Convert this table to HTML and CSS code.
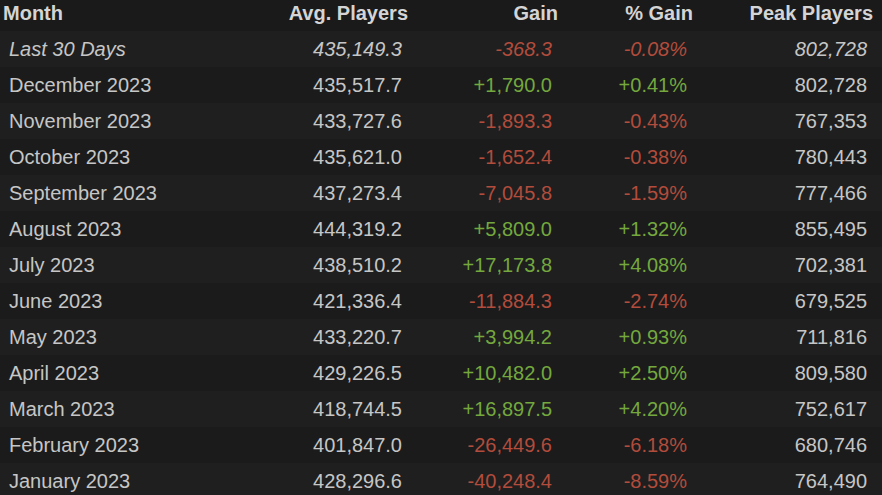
FILE: index.html
```html
<!DOCTYPE html>
<html>
<head>
<meta charset="utf-8">
<link rel="stylesheet" href="styles.css">
</head>
<body>
<div class="wrap">
<table class="stats">
  <thead>
    <tr><th class="c-month">Month</th><th>Avg. Players</th><th>Gain</th><th>% Gain</th><th>Peak Players</th></tr>
  </thead>
  <tbody>
    <tr class="current"><td class="c-month">Last 30 Days</td><td>435,149.3</td><td class="neg">-368.3</td><td class="neg">-0.08%</td><td>802,728</td></tr>
    <tr><td class="c-month">December 2023</td><td>435,517.7</td><td class="pos">+1,790.0</td><td class="pos">+0.41%</td><td>802,728</td></tr>
    <tr><td class="c-month">November 2023</td><td>433,727.6</td><td class="neg">-1,893.3</td><td class="neg">-0.43%</td><td>767,353</td></tr>
    <tr><td class="c-month">October 2023</td><td>435,621.0</td><td class="neg">-1,652.4</td><td class="neg">-0.38%</td><td>780,443</td></tr>
    <tr><td class="c-month">September 2023</td><td>437,273.4</td><td class="neg">-7,045.8</td><td class="neg">-1.59%</td><td>777,466</td></tr>
    <tr><td class="c-month">August 2023</td><td>444,319.2</td><td class="pos">+5,809.0</td><td class="pos">+1.32%</td><td>855,495</td></tr>
    <tr><td class="c-month">July 2023</td><td>438,510.2</td><td class="pos">+17,173.8</td><td class="pos">+4.08%</td><td>702,381</td></tr>
    <tr><td class="c-month">June 2023</td><td>421,336.4</td><td class="neg">-11,884.3</td><td class="neg">-2.74%</td><td>679,525</td></tr>
    <tr><td class="c-month">May 2023</td><td>433,220.7</td><td class="pos">+3,994.2</td><td class="pos">+0.93%</td><td>711,816</td></tr>
    <tr><td class="c-month">April 2023</td><td>429,226.5</td><td class="pos">+10,482.0</td><td class="pos">+2.50%</td><td>809,580</td></tr>
    <tr><td class="c-month">March 2023</td><td>418,744.5</td><td class="pos">+16,897.5</td><td class="pos">+4.20%</td><td>752,617</td></tr>
    <tr><td class="c-month">February 2023</td><td>401,847.0</td><td class="neg">-26,449.6</td><td class="neg">-6.18%</td><td>680,746</td></tr>
    <tr><td class="c-month">January 2023</td><td>428,296.6</td><td class="neg">-40,248.4</td><td class="neg">-8.59%</td><td>764,490</td></tr>
  </tbody>
</table>
</div>
</body>
</html>
```
FILE: styles.css
```css
html, body {
  margin: 0;
  padding: 0;
  background: #1b1b1b;
  overflow: hidden;
}
.wrap {
  margin-top: -5px;
}
.stats {
  width: 882px;
  border-collapse: collapse;
  table-layout: fixed;
  font-family: "Liberation Sans", Arial, sans-serif;
  font-size: 20px;
  color: #c6c6c6;
}
.stats th, .stats td {
  box-sizing: border-box;
  height: 36px;
  padding: 0;
  line-height: 36px;
  text-align: right;
  white-space: nowrap;
}
.stats th {
  font-weight: bold;
  color: #d4d4d4;
  background: #1a1a1a;
  padding-right: 9px;
}
.stats td { padding-right: 15px; }
.stats th:nth-child(1) { width: 267px; padding-left: 3px; }
.stats th:nth-child(2) { width: 150px; }
.stats th:nth-child(3) { width: 150px; }
.stats th:nth-child(4) { width: 135px; }
.stats th:nth-child(5) { width: 180px; }
.stats .c-month { text-align: left; }
.stats td.c-month { padding-left: 9px; }
.stats tbody tr:nth-child(odd) { background: #1f1f1f; }
.stats tbody tr:nth-child(even) { background: #1b1b1b; }
.stats tr.current td { font-style: italic; }
.stats .pos { color: #74a83e; }
.stats .neg { color: #b24c3c; }
```
